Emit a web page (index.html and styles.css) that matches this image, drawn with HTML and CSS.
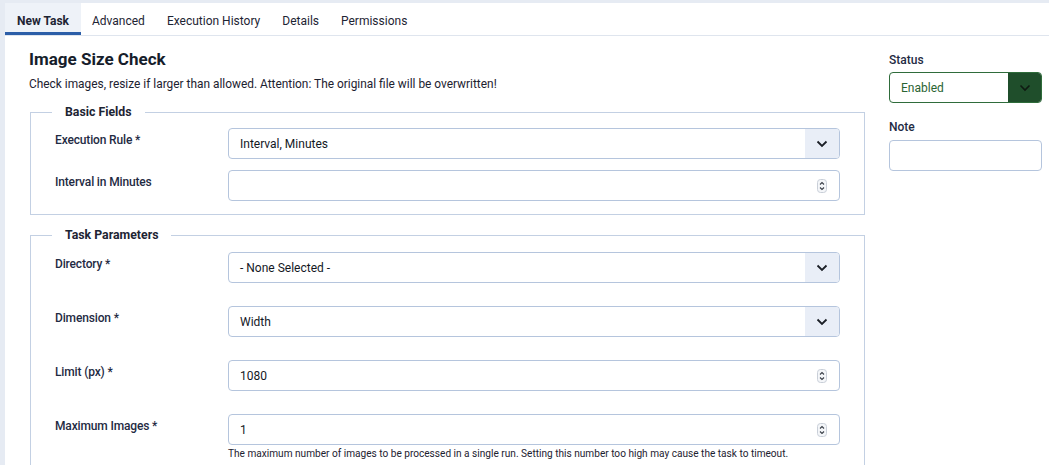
FILE: index.html
```html
<!DOCTYPE html>
<html lang="en">
<head>
  <meta charset="UTF-8" />
  <meta name="viewport" content="width=device-width, initial-scale=1.0" />
  <title>Image Size Check</title>
  <link rel="stylesheet" href="styles.css">
</head>

<body>
  <div class="page">
    <nav class="tabs">
      <a class="tab active">New Task</a>
      <a class="tab">Advanced</a>
      <a class="tab">Execution History</a>
      <a class="tab">Details</a>
      <a class="tab">Permissions</a>
    </nav>

    <div class="content">
      <div class="main">
        <h1>Image Size Check</h1>
        <p class="desc">Check images, resize if larger than allowed. Attention: The original file will be overwritten!</p>

        <fieldset class="group basic">
          <legend>Basic Fields</legend>
          <div class="field">
            <label>Execution Rule *</label>
            <div class="control select">
              <span class="value">Interval, Minutes</span>
              <span class="caret">
                <svg width="12" height="8" viewBox="0 0 12 8"><path d="M1.5 1.5 L6 6 L10.5 1.5" fill="none" stroke="#1b1f26" stroke-width="1.8"/></svg>
              </span>
            </div>
          </div>
          <div class="field">
            <label>Interval in Minutes</label>
            <div class="control number">
              <span class="value"></span>
              <span class="spin">
                <svg width="10" height="14" viewBox="0 0 10 14"><rect x="0.5" y="0.5" width="9" height="13" rx="3" fill="#f4f6f9" stroke="#c9cfd8"/><path d="M3 5.5 L5 3.5 L7 5.5 M3 8.5 L5 10.5 L7 8.5" fill="none" stroke="#3a3f47" stroke-width="1.1"/></svg>
              </span>
            </div>
          </div>
        </fieldset>

        <fieldset class="group params">
          <legend>Task Parameters</legend>
          <div class="field">
            <label>Directory *</label>
            <div class="control select">
              <span class="value">- None Selected -</span>
              <span class="caret">
                <svg width="12" height="8" viewBox="0 0 12 8"><path d="M1.5 1.5 L6 6 L10.5 1.5" fill="none" stroke="#1b1f26" stroke-width="1.8"/></svg>
              </span>
            </div>
          </div>
          <div class="field">
            <label>Dimension *</label>
            <div class="control select">
              <span class="value">Width</span>
              <span class="caret">
                <svg width="12" height="8" viewBox="0 0 12 8"><path d="M1.5 1.5 L6 6 L10.5 1.5" fill="none" stroke="#1b1f26" stroke-width="1.8"/></svg>
              </span>
            </div>
          </div>
          <div class="field">
            <label>Limit (px) *</label>
            <div class="control number">
              <span class="value">1080</span>
              <span class="spin">
                <svg width="10" height="14" viewBox="0 0 10 14"><rect x="0.5" y="0.5" width="9" height="13" rx="3" fill="#f4f6f9" stroke="#c9cfd8"/><path d="M3 5.5 L5 3.5 L7 5.5 M3 8.5 L5 10.5 L7 8.5" fill="none" stroke="#3a3f47" stroke-width="1.1"/></svg>
              </span>
            </div>
          </div>
          <div class="field">
            <label>Maximum Images *</label>
            <div class="control-wrap">
              <div class="control number">
                <span class="value">1</span>
                <span class="spin">
                  <svg width="10" height="14" viewBox="0 0 10 14"><rect x="0.5" y="0.5" width="9" height="13" rx="3" fill="#f4f6f9" stroke="#c9cfd8"/><path d="M3 5.5 L5 3.5 L7 5.5 M3 8.5 L5 10.5 L7 8.5" fill="none" stroke="#3a3f47" stroke-width="1.1"/></svg>
                </span>
              </div>
              <small class="help">The maximum number of images to be processed in a single run. Setting this number too high may cause the task to timeout.</small>
            </div>
          </div>
        </fieldset>
      </div>

      <aside class="side">
        <label>Status</label>
        <div class="control status">
          <span class="value">Enabled</span>
          <span class="caret">
            <svg width="12" height="8" viewBox="0 0 12 8"><path d="M1.5 1.5 L6 6 L10.5 1.5" fill="none" stroke="#0f1a12" stroke-width="1.6"/></svg>
          </span>
        </div>
        <label class="note-label">Note</label>
        <div class="control note"></div>
      </aside>
    </div>
  </div>
</body>
</html>
```

FILE: styles.css
```css
* {
  box-sizing: border-box;
}

body {
  margin: 0;
  background-color: #e6ebf3;
  font-family: Roboto, "Liberation Sans", sans-serif;
  color: #1f2b43;
  height: 465px;
  overflow: hidden;
}

.page {
  margin: 3px 0 0 5px;
  background: white;
  min-height: 462px;
}

.tabs {
  display: flex;
  height: 33px;
  border-bottom: 1px solid #dfe5ee;
}

.tab {
  display: flex;
  align-items: center;
  padding: 3px 11px 0 11px;
  font-size: 12px;
  font-weight: 400;
  color: #1d2433;
  cursor: pointer;
}

.tab.active {
  background-color: #eef2f8;
  border-bottom: 3px solid #2c5ea8;
  padding: 6px 12px 0 12px;
  font-weight: 700;
}

.content {
  display: grid;
  grid-template-columns: 836px 153px;
  gap: 24px;
  padding: 0 7px 0 24px;
}

h1 {
  margin: 12px 0 0;
  font-size: 17px;
  line-height: 22px;
  font-weight: 700;
  color: #161d2b;
}

.desc {
  margin: 5px 0 0;
  font-size: 11.9px;
  line-height: 18px;
  color: #1d2230;
}

.group {
  margin: 11px 0 0 1px;
  border: 1px solid #c3d0e3;
  padding: 8px 24px 13px 24px;
}

.group.params {
  margin-top: 12px;
  padding-top: 9px;
}

legend {
  margin-left: -3px;
  padding: 0 13px;
  font-size: 12.3px;
  font-weight: 700;
  line-height: 16px;
  color: #1d2433;
}

.field {
  display: flex;
}

.basic .field + .field {
  margin-top: 11px;
}

.params .field + .field {
  margin-top: 23px;
}

.field label {
  width: 173px;
  flex: none;
  padding-top: 3px;
  font-size: 12px;
  font-weight: 500;
  letter-spacing: -0.15px;
  line-height: 18px;
  color: #1f2b43;
}

.control-wrap {
  flex: 1;
}

.control {
  flex: 1;
  display: flex;
  align-items: center;
  height: 31px;
  border: 1px solid #b5c5dd;
  border-radius: 4px;
  background: white;
  overflow: hidden;
}

.control .value {
  flex: 1;
  padding-left: 11px;
  font-size: 12px;
  color: #14181f;
}

.control .caret {
  width: 34px;
  height: 100%;
  display: flex;
  align-items: center;
  justify-content: center;
  background-color: #e9eef7;
}

.control .spin {
  display: flex;
  align-items: center;
  padding-right: 12px;
}

.help {
  display: block;
  margin-top: 2px;
  font-size: 10.1px;
  line-height: 14px;
  color: #1d2230;
}

.side {
  display: flex;
  flex-direction: column;
  padding-top: 16px;
}

.side label {
  font-size: 12px;
  font-weight: 500;
  line-height: 16px;
  color: #1f2b43;
  margin-bottom: 4px;
}

.side .note-label {
  margin-top: 16px;
  margin-bottom: 5px;
}

.control.status {
  flex: none;
  border-color: #2f6c3b;
}

.status .value {
  color: #2a6433;
}

.status .caret {
  width: 33px;
  background-color: #1f4e2b;
}

.control.note {
  flex: none;
  height: 31px;
}
```
